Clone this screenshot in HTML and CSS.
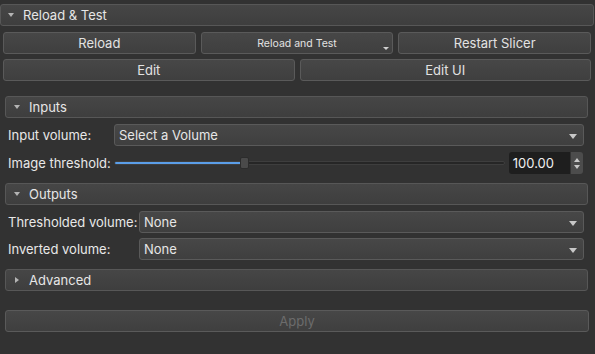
FILE: index.html
```html
<!DOCTYPE html>
<html lang="en">
<head>
    <meta charset="UTF-8">
    <meta name="viewport" content="width=device-width, initial-scale=1.0">
    <title>Threshold Module</title>
    <link rel="stylesheet" href="styles.css">
</head>
<body>
    <div class="panel">
        <div class="header top-header"><span class="arrow-down"></span>Reload &amp; Test</div>

        <div class="button-row three">
            <button class="btn">Reload</button>
            <button class="btn btn-small">Reload and Test<span class="menu-arrow"></span></button>
            <button class="btn">Restart Slicer</button>
        </div>
        <div class="button-row two">
            <button class="btn">Edit</button>
            <button class="btn">Edit UI</button>
        </div>

        <div class="section">
            <div class="header"><span class="arrow-down"></span>Inputs</div>
            <div class="form-row">
                <label class="label label-inputs">Input volume:</label>
                <div class="combo">Select a Volume<span class="combo-arrow"></span></div>
            </div>
            <div class="form-row form-row-wide">
                <label class="label">Image threshold:</label>
                <div class="slider">
                    <div class="groove"><div class="fill" style="width: 127px"></div></div>
                    <div class="handle" style="left: 126px"></div>
                </div>
                <div class="spinbox">
                    <div class="spin-value">100.00</div>
                    <div class="spin-buttons"><span class="spin-up"></span><span class="spin-down"></span></div>
                </div>
            </div>

            <div class="header header-gap"><span class="arrow-down"></span>Outputs</div>
            <div class="form-row">
                <label class="label label-outputs">Thresholded volume:</label>
                <div class="combo">None<span class="combo-arrow"></span></div>
            </div>
            <div class="form-row">
                <label class="label label-outputs">Inverted volume:</label>
                <div class="combo">None<span class="combo-arrow"></span></div>
            </div>

            <div class="header header-gap"><span class="arrow-right"></span>Advanced</div>

            <button class="btn apply" disabled>Apply</button>
        </div>
    </div>
</body>
</html>
```

FILE: styles.css
```css
* {
    box-sizing: border-box;
    font-family: 'Inter', 'Liberation Sans', Arial, sans-serif;
}

body {
    margin: 0;
    background: #323232;
    width: 595px;
    height: 354px;
    overflow: hidden;
    color: #e4e4e4;
    font-size: 13px;
}

.panel {
    padding-top: 4px;
}

.header {
    height: 22px;
    display: flex;
    align-items: center;
    background: linear-gradient(#464646, #3e3e3e);
    border: 1px solid #575757;
    border-radius: 3px;
    color: #e6e6e6;
    font-size: 13px;
    padding-left: 8px;
}

.top-header {
    width: 594px;
    padding-left: 7px;
}

.header-gap {
    margin-top: 9px;
}

.arrow-down {
    width: 0;
    height: 0;
    border-left: 3px solid transparent;
    border-right: 3px solid transparent;
    border-top: 4px solid #b4b4b4;
    margin-right: 9px;
}

.arrow-right {
    width: 0;
    height: 0;
    border-top: 3px solid transparent;
    border-bottom: 3px solid transparent;
    border-left: 4px solid #b4b4b4;
    margin-left: 1px;
    margin-right: 10px;
}

.button-row {
    display: grid;
    gap: 5px;
    margin-left: 3px;
    width: 588px;
}

.button-row.three {
    grid-template-columns: repeat(3, 1fr);
    margin-top: 6px;
}

.button-row.two {
    grid-template-columns: repeat(2, 1fr);
    margin-top: 5px;
}

.btn {
    position: relative;
    height: 22px;
    padding: 0;
    background: linear-gradient(#474747, #3f3f3f);
    border: 1px solid #5a5a5a;
    border-radius: 3px;
    color: #e2e2e2;
    font-size: 13px;
}

.btn-small {
    font-size: 10.5px;
}

.menu-arrow {
    position: absolute;
    right: 3px;
    bottom: 3px;
    width: 0;
    height: 0;
    border-left: 3px solid transparent;
    border-right: 3px solid transparent;
    border-top: 3px solid #d0d0d0;
}

.section {
    margin: 15px 7px 0 5px;
}

.form-row {
    display: flex;
    align-items: center;
    height: 22px;
    margin-top: 6px;
    padding-left: 3px;
}

.form-row + .form-row {
    margin-top: 5px;
}

.form-row + .form-row-wide {
    margin-top: 6px;
}

.label {
    color: #e8e8e8;
    font-size: 13px;
}

.label-inputs {
    width: 106px;
}

.label-outputs {
    width: 131px;
}

.combo {
    position: relative;
    flex: 1;
    height: 22px;
    display: flex;
    align-items: center;
    padding-left: 4px;
    background: linear-gradient(#474747, #3f3f3f);
    border: 1px solid #5a5a5a;
    border-radius: 3px;
    color: #e6e6e6;
    font-size: 13px;
    margin-right: 4px;
}

.combo-arrow {
    position: absolute;
    right: 6px;
    top: 9px;
    width: 0;
    height: 0;
    border-left: 4px solid transparent;
    border-right: 4px solid transparent;
    border-top: 5px solid #c8c8c8;
}

.slider {
    position: relative;
    width: 391px;
    height: 22px;
    margin-left: 3px;
}

.groove {
    position: absolute;
    left: 0;
    right: 0;
    top: 9px;
    height: 4px;
    background: #262626;
    border: 1px solid #3e3e3e;
    border-radius: 2px;
    overflow: hidden;
}

.fill {
    height: 100%;
    background: #5b9ee8;
}

.handle {
    position: absolute;
    top: 5px;
    width: 9px;
    height: 12px;
    background: #4a4a4a;
    border: 1px solid #2c2c2c;
    border-radius: 2px;
}

.spinbox {
    display: flex;
    height: 22px;
    margin-left: 4px;
    width: 74px;
    border-radius: 3px;
    overflow: hidden;
}

.spin-value {
    flex: 1;
    background: #1e1e1e;
    color: #f0f0f0;
    font-size: 13px;
    display: flex;
    align-items: center;
    padding-left: 4px;
}

.spin-buttons {
    width: 13px;
    background: #4c4c4c;
    border-left: 1px solid #333;
    display: flex;
    flex-direction: column;
    align-items: center;
    justify-content: center;
    gap: 3px;
}

.spin-up {
    width: 0;
    height: 0;
    border-left: 3px solid transparent;
    border-right: 3px solid transparent;
    border-bottom: 4px solid #c8c8c8;
}

.spin-down {
    width: 0;
    height: 0;
    border-left: 3px solid transparent;
    border-right: 3px solid transparent;
    border-top: 4px solid #c8c8c8;
}

.apply {
    display: block;
    width: 584px;
    margin-top: 19px;
    color: #6c6c6c;
}
```
